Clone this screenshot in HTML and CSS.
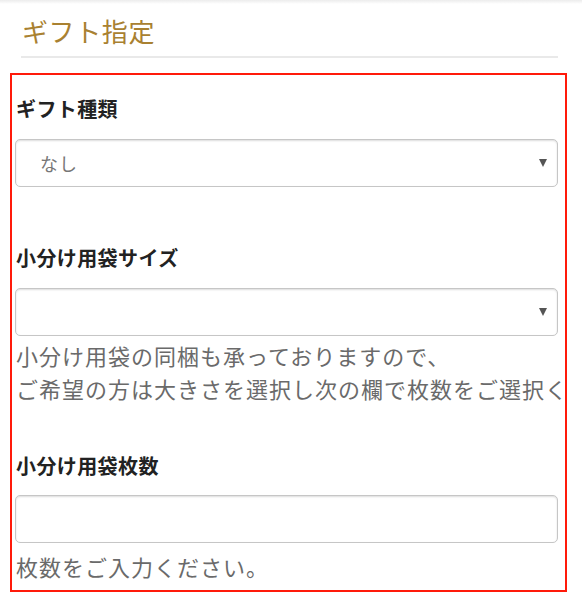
FILE: index.html
```html
<!DOCTYPE html>
<html lang="ja">
<head>
    <meta charset="UTF-8">
    <meta name="viewport" content="width=device-width, initial-scale=1.0">
    <title>ギフト指定</title>
    <link rel="stylesheet" href="styles.css">
</head>
<body>
    <div class="section-head">
        <h2 class="section-title">ギフト指定</h2>
    </div>

    <form class="gift-form">
        <div class="field">
            <label class="field-label" for="gift-type">ギフト種類</label>
            <div class="select-wrap">
                <select id="gift-type" class="select">
                    <option>なし</option>
                </select>
            </div>
        </div>

        <div class="field">
            <label class="field-label" for="bag-size">小分け用袋サイズ</label>
            <div class="select-wrap">
                <select id="bag-size" class="select">
                    <option></option>
                </select>
            </div>
            <p class="help">小分け用袋の同梱も承っておりますので、<br>ご希望の方は大きさを選択し次の欄で枚数をご選択ください。</p>
        </div>

        <div class="field">
            <label class="field-label" for="bag-count">小分け用袋枚数</label>
            <input type="text" id="bag-count" class="input">
            <p class="help help-last">枚数をご入力ください。</p>
        </div>
    </form>
</body>
</html>
```

FILE: styles.css
```css
body {
    margin: 0;
    background: #fff;
    font-family: "Noto Sans CJK JP", "Noto Sans", sans-serif;
    color: #333;
    background-image: linear-gradient(#ececec, #fff 4px);
    background-repeat: no-repeat;
}
.section-head {
    margin: 0 24px 0 21px;
    padding-top: 13px;
    padding-bottom: 7px;
    border-bottom: 2px solid #e9e9e9;
}
.section-title {
    margin: 0;
    padding-left: 1px;
    font-size: 26px;
    line-height: 36px;
    font-weight: 400;
    color: #a98131;
    letter-spacing: 0.6px;
}
.gift-form {
    margin: 15px 0 0 10px;
    width: 550px;
    border: 2px solid #ff1a0a;
    padding: 0 0 7px 3px;
    box-sizing: content-box;
    overflow: hidden;
}
.field {
    padding-top: 19px;
}
.field + .field {
    padding-top: 56px;
}
.field:last-child {
    padding-top: 46px;
}
.field-label {
    display: block;
    padding-left: 1px;
    font-size: 20px;
    line-height: 30px;
    font-weight: bold;
    color: #222;
    letter-spacing: 0.4px;
}
.select-wrap {
    position: relative;
    width: 543px;
    margin-top: 15px;
}
.select-wrap::after {
    content: "";
    position: absolute;
    right: 11px;
    top: 20px;
    border-left: 4px solid transparent;
    border-right: 4px solid transparent;
    border-top: 8px solid #555;
    pointer-events: none;
}
.select,
.input {
    display: block;
    width: 543px;
    height: 48px;
    margin: 0;
    box-sizing: border-box;
    border: 1px solid #c6c6c6;
    border-radius: 5px;
    background: #fff;
    box-shadow: inset 0 1px 2px rgba(0, 0, 0, 0.14);
    font-family: inherit;
    font-size: 18px;
    color: #777;
    outline: none;
}
.select {
    appearance: none;
    -webkit-appearance: none;
    padding: 0 30px 0 24px;
    letter-spacing: 1px;
}
.input {
    margin-top: 14px;
    padding: 0 12px;
}
.help {
    margin: 3px 0 0;
    padding-left: 1px;
    font-size: 22px;
    line-height: 33px;
    color: #6a6a6a;
    white-space: nowrap;
    letter-spacing: 1px;
}
.help-last {
    margin-top: 7px;
}
```
